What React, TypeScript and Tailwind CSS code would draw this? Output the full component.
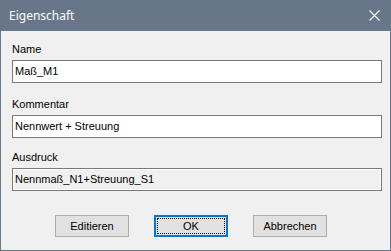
import React from 'react';

const ui = { fontFamily: '"Liberation Sans", Arial, sans-serif' };

function Field({ label, value, disabled, className = '' }: { label: string; value: string; disabled?: boolean; className?: string }) {
  return (
    <div className={className}>
      <div className="text-[11px] leading-[13px] text-black">{label}</div>
      <div
        className={
          'mt-[4px] h-[23px] border border-[#7a7a7a] flex items-center pl-[2px] text-[11px] text-black ' +
          (disabled ? 'bg-[#f0f0f0] shadow-[inset_0_0_0_1px_#ffffff]' : 'bg-white')
        }
      >
        {value}
      </div>
    </div>
  );
}

function Button({ label, focused }: { label: string; focused?: boolean }) {
  if (focused) {
    return (
      <div className="w-[74px] h-[22px] border-2 border-[#0078d7] bg-[#e1e1e1] p-[1px]">
        <div className="h-full w-full border border-dotted border-black flex items-center justify-center text-[11px] text-black">
          {label}
        </div>
      </div>
    );
  }
  return (
    <div className="w-[74px] h-[22px] border border-[#adadad] bg-[#e1e1e1] flex items-center justify-center text-[11px] text-black">
      {label}
    </div>
  );
}

export default function App() {
  return (
    <div className="w-[391px] h-[251px] bg-[#687689] flex flex-col" style={ui}>
      {/* title bar */}
      <div className="h-[31px] flex items-center justify-between pl-[9px] pr-[11px] shrink-0">
        <span className="text-white text-[12px]" style={{ fontFamily: '"Noto Sans", "Open Sans", sans-serif' }}>
          Eigenschaft
        </span>
        <svg width="11" height="11" viewBox="0 0 11 11" className="block">
          <path d="M0.5 0.5 L10.5 10.5 M10.5 0.5 L0.5 10.5" stroke="#ffffff" strokeWidth="1.1" fill="none" />
        </svg>
      </div>

      {/* body */}
      <div className="mx-[1px] mb-[1px] flex-1 bg-[#f0f0f0] pl-[11px] pr-[8px] pt-[12px]">
        <Field label="Name" value="Maß_M1" />
        <Field label="Kommentar" value="Nennwert + Streuung" className="mt-[15px]" />
        <Field label="Ausdruck" value="Nennmaß_N1+Streuung_S1" disabled className="mt-[13px]" />

        <div className="mt-[24px] flex gap-[25px] pl-[43px]">
          <Button label="Editieren" />
          <Button label="OK" focused />
          <Button label="Abbrechen" />
        </div>
      </div>
    </div>
  );
}
